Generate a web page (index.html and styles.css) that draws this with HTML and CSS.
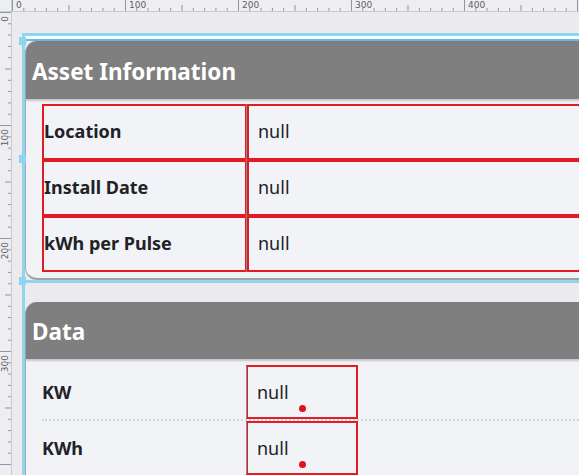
FILE: index.html
```html
<!DOCTYPE html>
<html>
<head>
<meta charset="utf-8">
<link rel="stylesheet" href="styles.css">
</head>
<body>
<div class="app">
  <div class="corner"></div>
  <div class="hruler">
    <svg width="567" height="12" viewBox="0 0 567 12">
      <defs>
        <pattern id="ht" patternUnits="userSpaceOnUse" width="113" height="12">
          <line x1="0.5" y1="0" x2="0.5" y2="12" class="tk"/>
          <line x1="11.8" y1="8" x2="11.8" y2="12" class="tk"/>
          <line x1="23.1" y1="8" x2="23.1" y2="12" class="tk"/>
          <line x1="34.4" y1="8" x2="34.4" y2="12" class="tk"/>
          <line x1="45.7" y1="8" x2="45.7" y2="12" class="tk"/>
          <line x1="57" y1="5" x2="57" y2="12" class="tk"/>
          <line x1="68.3" y1="8" x2="68.3" y2="12" class="tk"/>
          <line x1="79.6" y1="8" x2="79.6" y2="12" class="tk"/>
          <line x1="90.9" y1="8" x2="90.9" y2="12" class="tk"/>
          <line x1="102.2" y1="8" x2="102.2" y2="12" class="tk"/>
        </pattern>
      </defs>
      <rect x="0" y="0" width="567" height="12" fill="url(#ht)"/>
      <text x="4" y="7.5" class="rl">0</text>
      <text x="117" y="7.5" class="rl">100</text>
      <text x="230" y="7.5" class="rl">200</text>
      <text x="343" y="7.5" class="rl">300</text>
      <text x="456" y="7.5" class="rl">400</text>
    </svg>
  </div>
  <div class="vruler">
    <svg width="12" height="463" viewBox="0 0 12 463">
      <defs>
        <pattern id="vt" patternUnits="userSpaceOnUse" width="12" height="113">
          <line y1="0.5" x1="0" y2="0.5" x2="12" class="tk"/>
          <line y1="11.8" x1="8" y2="11.8" x2="12" class="tk"/>
          <line y1="23.1" x1="8" y2="23.1" x2="12" class="tk"/>
          <line y1="34.4" x1="8" y2="34.4" x2="12" class="tk"/>
          <line y1="45.7" x1="8" y2="45.7" x2="12" class="tk"/>
          <line y1="57" x1="5" y2="57" x2="12" class="tk"/>
          <line y1="68.3" x1="8" y2="68.3" x2="12" class="tk"/>
          <line y1="79.6" x1="8" y2="79.6" x2="12" class="tk"/>
          <line y1="90.9" x1="8" y2="90.9" x2="12" class="tk"/>
          <line y1="102.2" x1="8" y2="102.2" x2="12" class="tk"/>
        </pattern>
      </defs>
      <rect x="0" y="0" width="12" height="463" fill="url(#vt)"/>
      <text transform="translate(7.5 4) rotate(-90)" text-anchor="end" class="rl">0</text>
      <text transform="translate(7.5 117) rotate(-90)" text-anchor="end" class="rl">100</text>
      <text transform="translate(7.5 230) rotate(-90)" text-anchor="end" class="rl">200</text>
      <text transform="translate(7.5 343) rotate(-90)" text-anchor="end" class="rl">300</text>
    </svg>
  </div>
  <div class="canvas">
    <div class="frame">
      <div class="selected">
        <span class="handle h-top"></span>
        <span class="handle h-mid"></span>
        <span class="handle h-bot"></span>
        <section class="card">
          <header class="card-head">Asset Information</header>
          <div class="grid">
            <div class="cell label">Location</div>
            <div class="cell value">null</div>
            <div class="cell label">Install Date</div>
            <div class="cell value">null</div>
            <div class="cell label">kWh per Pulse</div>
            <div class="cell value">null</div>
          </div>
        </section>
      </div>
      <section class="card data">
        <header class="card-head">Data</header>
        <div class="data-rows">
          <div class="drow">
            <div class="dlabel">KW</div>
            <div class="dvalue">null<span class="dot"></span></div>
          </div>
          <div class="drow">
            <div class="dlabel">KWh</div>
            <div class="dvalue">null<span class="dot"></span></div>
          </div>
        </div>
      </section>
    </div>
  </div>
</div>
</body>
</html>
```

FILE: styles.css
```css
* { box-sizing: border-box; }
html, body {
  margin: 0;
  padding: 0;
  width: 579px;
  height: 475px;
  overflow: hidden;
  background: #ebebed;
  font-family: "Noto Sans", "Open Sans", sans-serif;
}
.app {
  display: grid;
  grid-template-columns: 12px 1fr;
  grid-template-rows: 12px 1fr;
  width: 579px;
  height: 475px;
}
.corner {
  background: #eeeef0;
  border-right: 1px solid #c9ccd4;
  border-bottom: 1px solid #c9ccd4;
}
.hruler {
  background: #eeeef0;
  border-bottom: 1px solid #c9ccd4;
  overflow: hidden;
}
.vruler {
  background: #eeeef0;
  border-right: 1px solid #c9ccd4;
  overflow: hidden;
}
.hruler svg, .vruler svg { display: block; }
.tk { stroke: #8c97ad; stroke-width: 1; }
.rl {
  font-family: "DejaVu Sans", sans-serif;
  font-size: 9px;
  fill: #5a5f6a;
}
.canvas {
  overflow: hidden;
  padding: 21px 0 0 10px;
}
.frame {
  border-left: 3px solid #8fd5f2;
  min-height: 600px;
  width: 600px;
}
.selected {
  position: relative;
  border-top: 3px solid #8fd5f2;
  border-bottom: 3px solid #8fd5f2;
  padding-top: 5px;
  background: linear-gradient(#ffffff 0 3px, #58bfea 3px 5px, transparent 5px);
}
.handle {
  position: absolute;
  left: -6px;
  width: 7px;
  height: 8px;
  background: #8fd5f2;
}
.h-top { top: 1px; }
.h-mid { top: 119px; }
.h-bot { bottom: -5px; }
.card {
  background: #f2f3f7;
  border-radius: 12px 0 0 12px;
  border-left: 1px solid #a8a8ab;
  border-bottom: 2px solid #a2a2a5;
  padding-bottom: 6px;
}
.card-head {
  height: 58px;
  background: #7f7f7f;
  border-radius: 11px 0 0 0;
  color: #ffffff;
  font-weight: 700;
  font-size: 22.5px;
  display: flex;
  align-items: center;
  padding-left: 6px;
  padding-top: 2px;
  box-shadow: 0 2px 2px rgba(0,0,0,0.18);
}
.grid {
  margin: 5px 0 0 16px;
  display: grid;
  grid-template-columns: 205px 1fr;
}
.cell {
  height: 56px;
  display: flex;
  align-items: center;
  font-size: 18px;
  color: #202226;
  border: 2px solid #e31b23;
}
.label {
  font-weight: 700;
  padding-left: 0;
  padding-bottom: 2px;
}
.value {
  padding-left: 10px;
  padding-bottom: 2px;
  border-left-width: 1px;
  box-shadow: inset 1px 0 0 #e31b23;
  position: relative;
  font-weight: 400;
}
.value::before {
  content: "";
  position: absolute;
  left: -2px;
  top: -2px;
  bottom: -2px;
  width: 1px;
  background: #8b8b8b;
}
.data {
  margin-top: 19px;
  border-radius: 12px 0 0 0;
  border-bottom: none;
  min-height: 200px;
}
.data .card-head {
  height: 57px;
}
.data-rows {
  margin: 6px 0 0 16px;
}
.drow {
  display: flex;
  height: 56px;
  border-bottom: 2px dotted #d3d5da;
}
.dlabel {
  width: 204px;
  display: flex;
  align-items: center;
  font-weight: 700;
  font-size: 18px;
  color: #202226;
}
.dvalue {
  position: relative;
  width: 112px;
  height: 54px;
  border: 2px solid #e31b23;
  border-left: 1px solid #8b8b8b;
  box-shadow: inset 1px 0 0 #e31b23;
  display: flex;
  align-items: center;
  padding-left: 10px;
  font-size: 18px;
  color: #202226;
}
.dot {
  position: absolute;
  left: 52px;
  bottom: 5px;
  width: 7px;
  height: 7px;
  border-radius: 50%;
  background: #e0121c;
}
```
